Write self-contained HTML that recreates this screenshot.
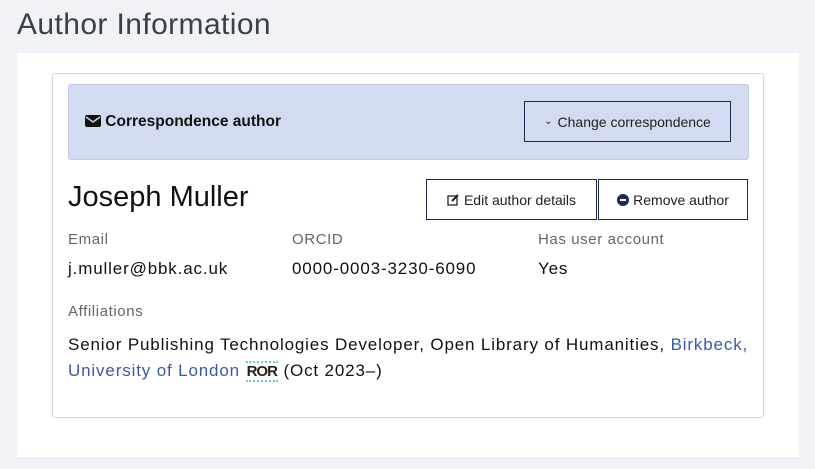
<!DOCTYPE html>
<html><head><style>
body{margin:0;width:815px;height:469px;background:#f1f2f7;font-family:"Liberation Sans",sans-serif;position:relative;overflow:hidden;color:#111}
.a{position:absolute;white-space:nowrap}
h1{position:absolute;left:17px;top:8px;margin:0;font-size:30px;font-weight:normal;color:#3a3f4d;letter-spacing:0.4px}
.panel{position:absolute;left:17px;top:53px;width:782px;height:404px;background:#fff}
.card{position:absolute;left:52px;top:73px;width:710px;height:343px;border:1px solid #d8d8d8;border-radius:3px}
.blue{position:absolute;left:68px;top:84px;width:679px;height:74px;background:#d3dbf1;border:1px solid #c3cbe3;border-radius:3px}
.btn{position:absolute;border:1px solid #1b2a4e;background:transparent;font-size:14px;color:#222;display:flex;align-items:center;justify-content:center}
.lbl{font-size:15px;color:#666;letter-spacing:0.6px}
.val{font-size:17px;color:#111;letter-spacing:0.85px}
a{color:#3a5aa8;text-decoration:none}
</style></head><body>
<h1>Author Information</h1>
<div class="panel"></div>
<div class="card"></div>
<div class="blue"></div>
<div class="a" style="left:85px;top:113px;font-size:15.5px;font-weight:bold;color:#111">
<svg width="16" height="12" viewBox="0 0 16 12" style="vertical-align:-1px"><rect x="0" y="0" width="16" height="12" rx="2" fill="#111"/><path d="M1 2 L8 7 L15 2" stroke="#d3dbf1" stroke-width="1.4" fill="none"/></svg> Correspondence author</div>
<div class="btn" style="left:524px;top:101px;width:205px;height:39px;background:#d3dbf1"><span style="font-size:10px;margin-right:5px">&#8964;</span>Change correspondence</div>
<div class="a" style="left:68px;top:181px;font-size:29px;color:#111">Joseph Muller</div>
<div class="btn" style="left:426px;top:179px;width:169px;height:39px">
<svg width="12" height="12" viewBox="0 0 12 12" style="margin-right:5px"><rect x="1" y="2" width="9" height="9" fill="none" stroke="#222" stroke-width="1.3"/><path d="M5 7 L11 1" stroke="#222" stroke-width="2"/></svg>Edit author details</div>
<div class="btn" style="left:598px;top:179px;width:148px;height:39px">
<svg width="12" height="12" viewBox="0 0 12 12" style="margin-right:4px"><circle cx="6" cy="6" r="6" fill="#1b2a4e"/><rect x="3" y="5" width="6" height="2" fill="#fff"/></svg>Remove author</div>
<div class="a lbl" style="left:68px;top:231px">Email</div>
<div class="a lbl" style="left:292px;top:231px">ORCID</div>
<div class="a lbl" style="left:538px;top:231px">Has user account</div>
<div class="a val" style="left:68px;top:259px">j.muller@bbk.ac.uk</div>
<div class="a val" style="left:292px;top:259px">0000-0003-3230-6090</div>
<div class="a val" style="left:538px;top:259px">Yes</div>
<div class="a lbl" style="left:68px;top:303px">Affiliations</div>
<div class="a val" style="left:68px;top:335px">Senior Publishing Technologies Developer, Open Library of Humanities, <a>Birkbeck,</a></div>
<div class="a val" style="left:68px;top:361px"><a>University of London</a> <span style="font-weight:bold;font-size:15px;color:#222;letter-spacing:-1px;border-top:2px dotted #6cc;border-bottom:2px dotted #6cc;padding:0 1px">ROR</span> (Oct 2023–)</div>
</body></html>
